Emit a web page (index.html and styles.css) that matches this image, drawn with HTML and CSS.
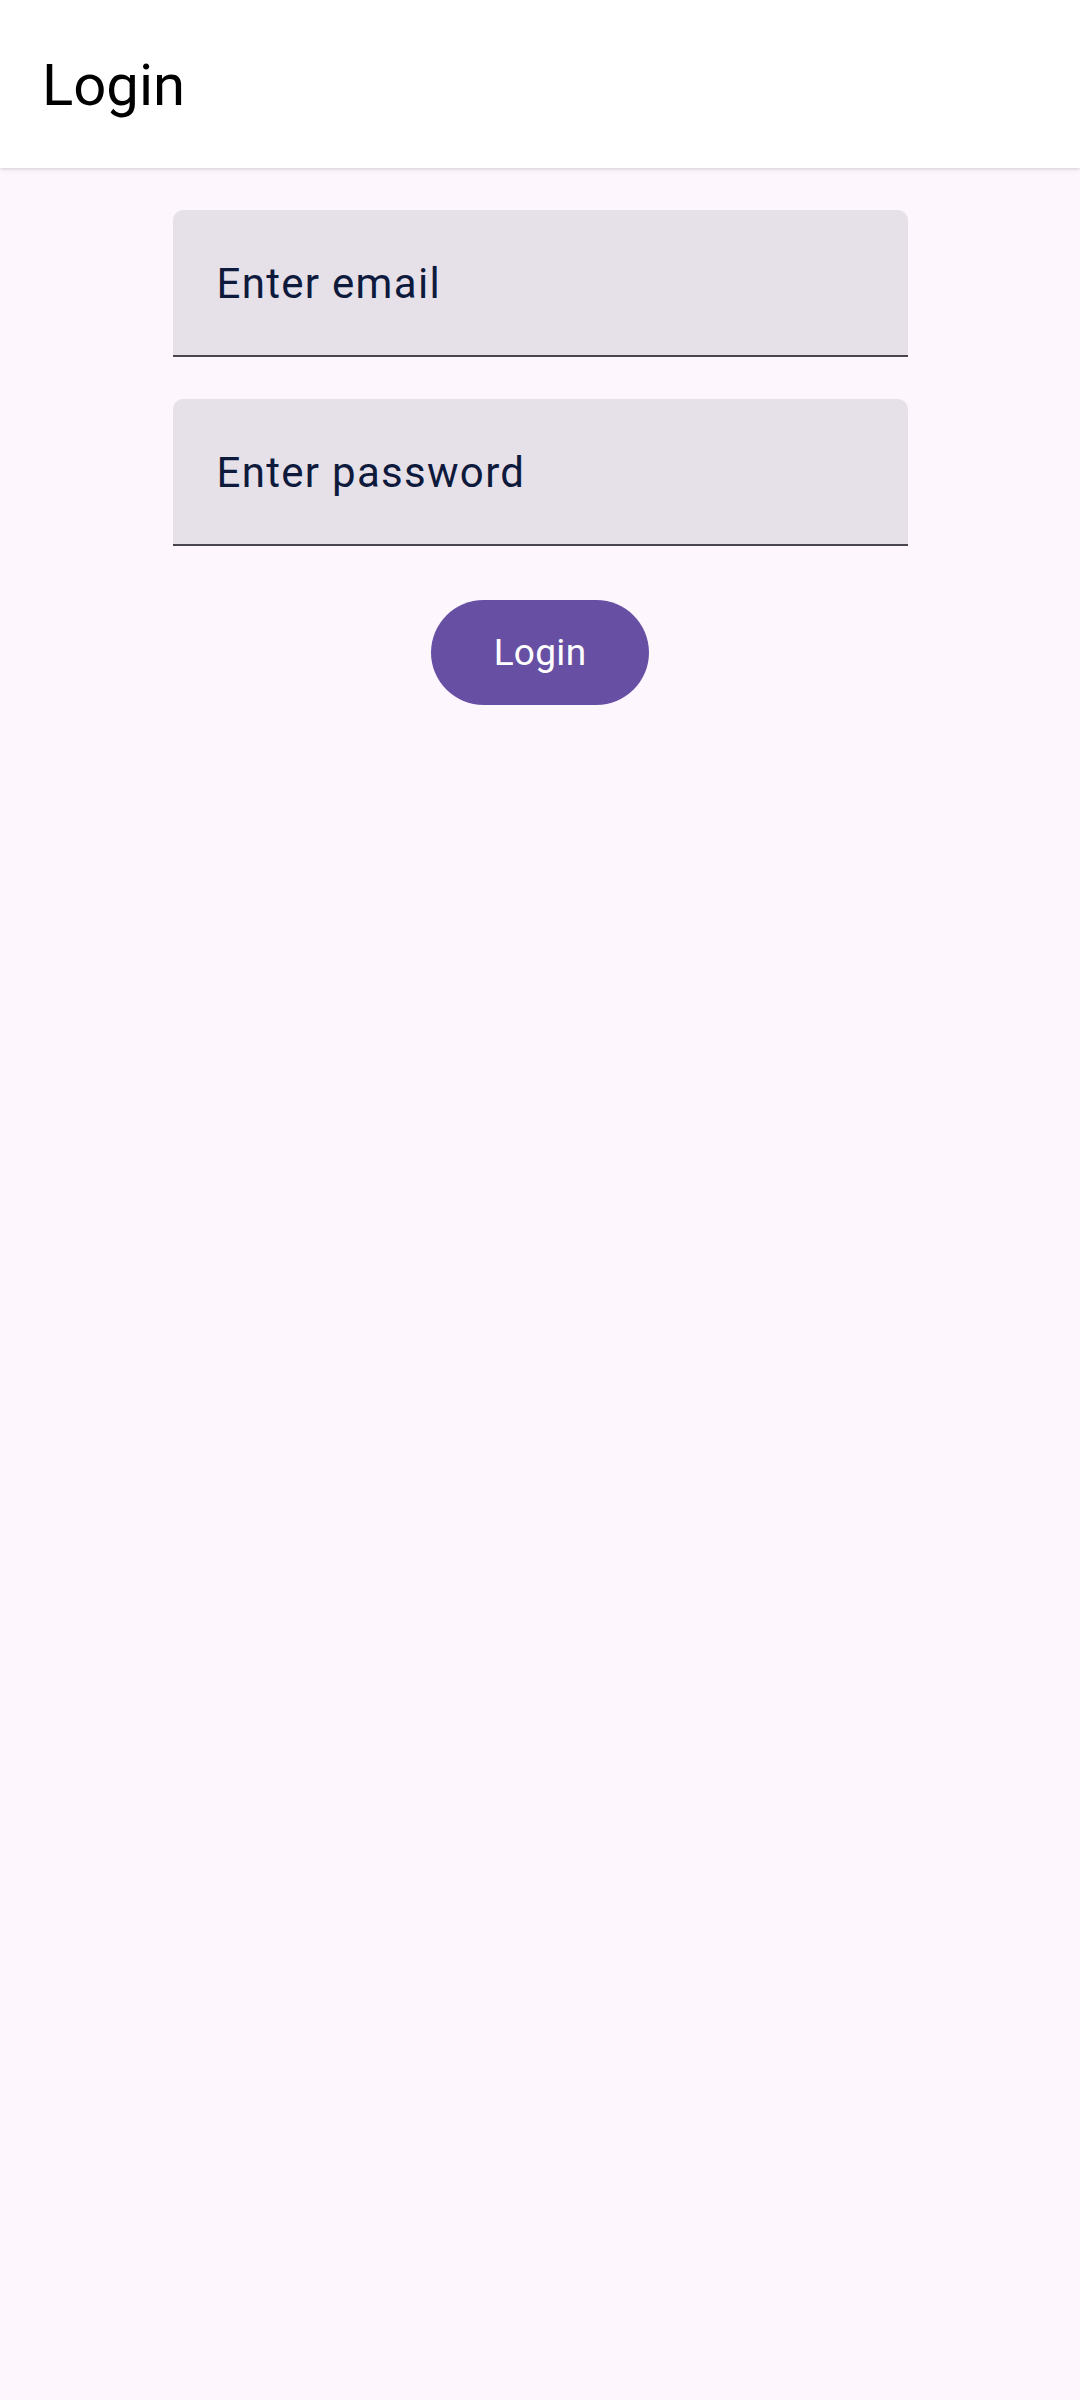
FILE: index.html
```html
<!DOCTYPE html>
<html>
<head>
<meta charset="utf-8">
<link rel="stylesheet" href="styles.css">
</head>
<body>
<header class="appbar">
  <h1 class="title">Login</h1>
</header>
<main class="content">
  <div class="field"><span class="placeholder">Enter email</span></div>
  <div class="field"><span class="placeholder">Enter password</span></div>
  <button class="btn">Login</button>
</main>
</body>
</html>
```
FILE: styles.css
```css
html, body {
  margin: 0;
  padding: 0;
}
body {
  width: 1080px;
  height: 2400px;
  background: #FDF7FD;
  font-family: Roboto, "Noto Sans", sans-serif;
  overflow: hidden;
}
.appbar {
  height: 168px;
  background: #FFFFFF;
  display: flex;
  align-items: center;
  padding: 0 42px;
  box-shadow: 0 1px 3px rgba(0,0,0,0.12), 0 2px 6px rgba(0,0,0,0.06);
  position: relative;
  z-index: 1;
}
.title {
  margin: 0;
  font-weight: 400;
  font-size: 58px;
  color: #000000;
  line-height: 1;
  padding-top: 2px;
}
.content {
  display: flex;
  flex-direction: column;
  align-items: center;
  padding-top: 42px;
  gap: 42px;
}
.field {
  width: 735px;
  height: 147px;
  box-sizing: border-box;
  background: #E6E0E9;
  border-radius: 10px 10px 0 0;
  border-bottom: 2.6px solid #49454F;
  display: flex;
  align-items: center;
  padding: 0 44px;
}
.placeholder {
  font-size: 42px;
  letter-spacing: 1.3px;
  color: #0E1A3C;
  line-height: 1;
  padding-top: 2px;
}
.btn {
  margin-top: 12px;
  height: 105px;
  padding: 0 63px;
  border: none;
  border-radius: 53px;
  background: #6750A4;
  color: #FFFFFF;
  font-family: Roboto, "Noto Sans", sans-serif;
  font-size: 37px;
  letter-spacing: 0.3px;
  font-weight: 400;
}
```
